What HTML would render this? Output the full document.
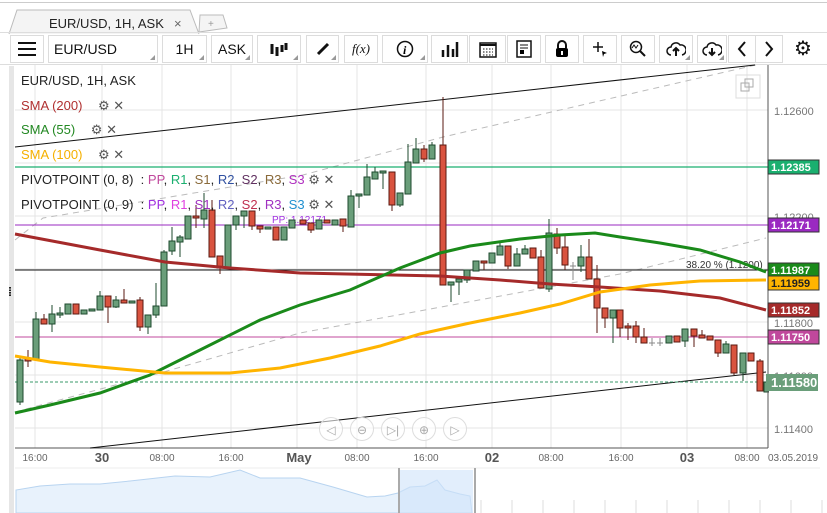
<!DOCTYPE html>
<html><head><meta charset="utf-8"><style>
*{margin:0;padding:0;box-sizing:border-box}
body{width:827px;height:513px;background:#fff;font-family:"Liberation Sans",sans-serif;overflow:hidden;position:relative}
.b{position:absolute;top:35px;height:28px;border:1px solid #dcdcdc;background:#fff;font-size:14px;color:#111;display:flex;align-items:center;justify-content:center}
.b:after{content:"";position:absolute;right:2px;bottom:2px;border-left:5px solid transparent;border-bottom:5px solid #999}
.n:after{display:none}
.lg{position:absolute;left:21px;font-size:13px;color:#222;white-space:nowrap}
</style></head><body>
<div style="position:absolute;left:0;top:2px;width:827px;height:1px;background:#ccc"></div>
<svg style="position:absolute;left:0;top:8px" width="240" height="27">
<path d="M9,26 L17,2 L190,2 L199,26" fill="#f4f4f4" stroke="#bbb"/>
<path d="M199,24 L200,7 L223,7 L227,20 Z" fill="#f4f4f4" stroke="#bbb"/>
<text x="49" y="20" font-size="13" fill="#222" font-family="Liberation Sans">EUR/USD, 1H, ASK</text>
<text x="174" y="20" font-size="13" fill="#666" font-family="Liberation Sans">×</text>
<text x="208" y="19" font-size="10" fill="#999" font-family="Liberation Sans">+</text>
</svg>
<div style="position:absolute;left:0;top:32px;width:827px;height:1px;background:#ddd"></div>
<div class="b n" style="left:10px;width:34px"><svg width="18" height="14"><path d="M0,1H18M0,7H18M0,13H18" stroke="#111" stroke-width="2"/></svg></div>
<div class="b" style="left:48px;width:110px;justify-content:flex-start;padding-left:5px">EUR/USD</div>
<div class="b" style="left:162px;width:45px">1H</div>
<div class="b" style="left:211px;width:42px">ASK</div>
<div class="b" style="left:257px;width:44px"><svg width="18" height="14"><path d="M2,2V12M7,5V14M12,3V10M16,1V8" stroke="#111" stroke-width="3"/></svg></div>
<div class="b" style="left:306px;width:33px"><svg width="14" height="14"><path d="M2,12L12,2" stroke="#111" stroke-width="3"/></svg></div>
<div class="b n" style="left:344px;width:34px;font-family:'Liberation Serif';font-style:italic;font-size:13px">f(x)</div>
<div class="b" style="left:382px;width:46px"><svg width="18" height="18"><circle cx="9" cy="9" r="7.5" fill="none" stroke="#111" stroke-width="1.5"/><text x="7" y="14" font-size="12" font-style="italic" font-weight="bold" font-family="Liberation Serif">i</text></svg></div>
<div class="b n" style="left:431px;width:37px"><svg width="18" height="16"><path d="M2,16V9M7,16V4M12,16V8M16,16V1" stroke="#111" stroke-width="2.5"/></svg></div>
<div class="b n" style="left:469px;width:37px"><svg width="18" height="18"><rect x="1" y="3" width="16" height="14" fill="none" stroke="#111" stroke-width="1.5"/><path d="M1,5H17" stroke="#111" stroke-width="2"/><path d="M4,9h10M4,12h10M4,15h10" stroke="#111" stroke-dasharray="1.5 1.5"/></svg></div>
<div class="b n" style="left:507px;width:34px"><svg width="16" height="18"><rect x="1" y="1" width="14" height="16" fill="none" stroke="#111" stroke-width="1.5"/><path d="M4,5h8M4,8h8" stroke="#111"/><rect x="4" y="10" width="4" height="4"/></svg></div>
<div class="b n" style="left:545px;width:34px"><svg width="16" height="18"><path d="M4,8V5a4,4 0 0 1 8,0V8" fill="none" stroke="#111" stroke-width="2"/><rect x="2" y="8" width="12" height="9" rx="2"/><rect x="7" y="11" width="2" height="4" fill="#fff"/></svg></div>
<div class="b n" style="left:583px;width:34px"><svg width="16" height="16"><path d="M6,1V11M1,6H11" stroke="#111" stroke-width="1.5"/><path d="M10,10L15,12L12,13L11,16Z"/></svg></div>
<div class="b n" style="left:621px;width:34px"><svg width="18" height="18"><circle cx="7" cy="7" r="5.5" fill="none" stroke="#111" stroke-width="1.5"/><path d="M11,11L16,16" stroke="#111" stroke-width="2"/><path d="M3,8L5,5L7,8L9,5" fill="none" stroke="#111"/></svg></div>
<div class="b" style="left:659px;width:34px"><svg width="20" height="16"><path d="M5,14A4,4 0 0 1 5,6A5,5 0 0 1 14,4A4,4 0 0 1 16,14" fill="none" stroke="#111" stroke-width="1.5"/><path d="M10,15V8M7,10L10,7L13,10" fill="none" stroke="#111" stroke-width="2"/></svg></div>
<div class="b" style="left:697px;width:30px"><svg width="20" height="16"><path d="M5,14A4,4 0 0 1 5,6A5,5 0 0 1 14,4A4,4 0 0 1 16,14" fill="none" stroke="#111" stroke-width="1.5"/><path d="M10,7V14M7,11L10,14L13,11" fill="none" stroke="#111" stroke-width="2"/></svg></div>
<div class="b n" style="left:728px;width:28px"><svg width="10" height="16"><path d="M8,1L2,8L8,15" fill="none" stroke="#111" stroke-width="2"/></svg></div>
<div class="b n" style="left:755px;width:28px"><svg width="10" height="16"><path d="M2,1L8,8L2,15" fill="none" stroke="#111" stroke-width="2"/></svg></div>
<div style="position:absolute;left:794px;top:40px;font-size:20px;color:#111;line-height:18px">⚙</div>
<div style="position:absolute;left:0;top:64px;width:827px;height:1px;background:#ddd"></div>
<div style="position:absolute;left:9px;top:66px;width:5px;height:447px;background:#e6e6e6"></div>
<div style="position:absolute;left:8px;top:285px;font-size:12px;font-weight:bold">⁞</div>
<svg id="c" style="position:absolute;left:0;top:0" width="827" height="513" font-family="Liberation Sans"></svg>
<div class="lg" style="top:73px">EUR/USD, 1H, ASK</div>
<div class="lg" style="top:98px;color:#b03030">SMA (200) <span style="color:#555;margin-left:12px">⚙ ✕</span></div>
<div class="lg" style="top:122px;color:#228822">SMA (55) <span style="color:#555;margin-left:12px">⚙ ✕</span></div>
<div class="lg" style="top:147px;color:#f5b000">SMA (100) <span style="color:#555;margin-left:12px">⚙ ✕</span></div>
<div class="lg" style="top:172px">PIVOTPOINT (0, 8) &nbsp;: <span style="color:#c0489c">PP</span>, <span style="color:#1aaf6f">R1</span>, <span style="color:#8a6a3a">S1</span>, <span style="color:#3050a0">R2</span>, <span style="color:#603060">S2</span>, <span style="color:#8a6a3a">R3</span>, <span style="color:#b030c0">S3</span> <span style="color:#555">⚙ ✕</span></div>
<div class="lg" style="top:197px">PIVOTPOINT (0, 9) &nbsp;: <span style="color:#a030e0">PP</span>, <span style="color:#e040e0">R1</span>, <span style="color:#a030c0">S1</span>, <span style="color:#6060c0">R2</span>, <span style="color:#c03050">S2</span>, <span style="color:#a030c0">R3</span>, <span style="color:#2090d0">S3</span> <span style="color:#555">⚙ ✕</span></div>
<script>
var s='',ns=document.getElementById('c');
var X=[35,102,162,231,297,357,426,492,551,621,687,747],Y=[110,163,216,269,322,375,428];
X.forEach(x=>s+=`<line x1="${x}" y1="65" x2="${x}" y2="448" stroke="#e4e4e4"/>`);
Y.forEach(y=>s+=`<line x1="15" y1="${y}" x2="768" y2="${y}" stroke="#e4e4e4"/>`);
s+=`<line x1="15" y1="448" x2="768" y2="448" stroke="#555"/><line x1="768" y1="65" x2="768" y2="448" stroke="#555"/>`;
s+=`<rect x="736" y="75" width="24" height="23" fill="none" stroke="#ddd"/><rect x="741" y="83" width="8" height="8" fill="none" stroke="#aaa"/><rect x="745" y="79" width="8" height="8" fill="none" stroke="#aaa"/>`;
s+=`<polyline points="15,240 43,218 303,175 443,137 760,64" fill="none" stroke="#bbb" stroke-dasharray="6 5"/>`;
s+=`<polyline points="15,412 160,373 300,333 620,274 766,238" fill="none" stroke="#bbb" stroke-dasharray="6 5"/>`;
s+=`<line x1="15" y1="147" x2="755" y2="65" stroke="#111"/><line x1="90" y1="448" x2="766" y2="372" stroke="#111"/>`;
s+=`<line x1="15" y1="167" x2="768" y2="167" stroke="#1aaf6f" stroke-width="1.2"/><line x1="15" y1="225" x2="768" y2="225" stroke="#9a29c1"/><line x1="15" y1="270" x2="768" y2="270" stroke="#111"/><line x1="15" y1="337" x2="768" y2="337" stroke="#c0489c"/><line x1="15" y1="382" x2="768" y2="382" stroke="#3a9a6a" stroke-dasharray="3 2"/>`;
s+=`<text x="272" y="223" font-size="10" fill="#a030e0">PP: 1.12171</text><text x="686" y="268" font-size="10" fill="#333">38.20 % (1.1200)</text>`;
var C=[[20,360,402,356,405,1],[28,359,361,350,367,0],[36,319,360,312,360,1],[44,319,324,314,324,0],[52,314,324,305,332,1],[60,313,315,307,318,1],[68,304,314,304,314,1],[76,304,314,304,314,0],[84,310,314,310,314,1],[92,309,311,309,311,1],[100,296,310,291,310,1],[108,296,307,296,323,0],[116,300,307,296,308,1],[124,300,303,289,303,0],[132,301,303,301,303,1],[140,300,327,297,331,0],[148,315,327,315,334,1],[156,306,315,283,318,1],[164,252,306,250,306,1],[172,241,251,227,255,1],[180,237,242,235,257,1],[188,216,239,216,239,1],[196,216,218,205,228,0],[204,210,219,193,228,1],[212,210,257,200,257,0],[220,256,268,256,274,0],[228,225,268,225,268,1],[236,216,225,216,230,1],[244,211,216,211,228,1],[252,211,226,211,230,0],[260,226,229,226,233,0],[268,227,229,227,229,1],[276,227,240,227,240,0],[284,227,240,227,240,1],[292,220,228,220,228,1],[303,220,224,220,224,0],[311,223,230,223,233,0],[319,220,229,220,229,1],[327,220,223,220,223,0],[335,220,225,220,225,1],[343,219,226,219,232,0],[351,196,227,190,227,1],[359,194,196,194,208,1],[367,177,195,164,195,1],[375,172,179,167,179,1],[383,171,173,171,189,1],[392,172,205,172,211,0],[400,193,205,193,207,1],[408,162,194,144,194,1],[416,149,163,138,163,1],[424,149,159,145,162,0],[432,145,159,142,159,1],[443,145,285,97,285,0],[451,282,285,282,302,1],[459,279,282,279,295,1],[467,270,280,270,283,1],[476,261,271,261,271,1],[484,261,263,261,270,0],[492,253,263,253,263,1],[500,246,255,243,255,1],[508,246,266,246,269,0],[517,254,266,248,266,1],[525,249,254,245,254,1],[533,248,258,248,252,0],[541,257,288,250,288,0],[549,233,289,219,292,1],[557,234,248,228,254,0],[565,247,265,236,270,0],[573,265,267,262,280,2],[581,257,266,245,272,1],[589,257,279,239,279,0],[597,279,308,265,333,0],[605,308,318,308,328,0],[613,310,318,310,343,1],[620,310,328,310,337,0],[628,326,328,323,340,0],[636,326,337,321,343,0],[644,337,343,328,343,0],[652,342,344,338,346,2],[660,342,344,338,346,2],[669,336,343,336,343,1],[677,336,342,336,342,0],[685,329,341,329,347,1],[694,329,336,329,347,0],[702,335,338,330,338,0],[710,336,340,336,340,0],[718,340,353,340,357,0],[726,344,353,341,353,1],[734,345,373,345,375,0],[743,353,373,353,381,1],[751,353,361,353,361,0],[760,361,391,359,391,0],[767,382,392,382,392,1]];
C.forEach(c=>{var col=c[5]==1?'#6a9e7a':c[5]==0?'#d9533f':'#888',st=c[5]==1?'#1e4a2e':c[5]==0?'#5a1a10':'#888';
s+=`<line x1="${c[0]}" y1="${c[3]}" x2="${c[0]}" y2="${c[4]}" stroke="${st}"/>`;
if(c[5]==2)s+=`<line x1="${c[0]-3}" y1="${c[1]+1}" x2="${c[0]+3}" y2="${c[1]+1}" stroke="#888"/>`;
else s+=`<rect x="${c[0]-3}" y="${c[1]}" width="6" height="${Math.max(2,c[2]-c[1])}" fill="${col}" stroke="${st}"/>`;});
s+=`<polyline points="15,234 100,250 165,262 230,268 300,273 440,276 500,280 550,284 600,287 660,291 720,298 766,310" fill="none" stroke="#a52a2a" stroke-width="3"/>`;
s+=`<polyline points="15,413 50,405 100,393 150,375 200,350 260,320 300,305 350,290 400,268 440,253 470,246 520,239 560,235 595,233 620,237 660,243 700,250 740,262 766,272" fill="none" stroke="#1a8a1a" stroke-width="3"/>`;
s+=`<polyline points="15,356 50,362 100,367 165,373 230,373 280,368 330,358 380,346 420,334 470,323 520,313 560,304 600,292 650,285 700,281 766,280" fill="none" stroke="#ffb400" stroke-width="3"/>`;
s+=`<rect x="769" y="65" width="58" height="390" fill="#fff"/>`;
[['1.12600',110],['1.12400',163],['1.12200',216],['1.12000',269],['1.11800',322],['1.11600',375],['1.11400',428]].forEach(t=>s+=`<text x="774" y="${t[1]+5}" font-size="11" fill="#777">${t[0]}</text>`);
s+=`<line x1="768" y1="65" x2="768" y2="448" stroke="#555"/>`;
[['1.12385',160,'#1aaf6f'],['1.12171',218,'#9a29c1'],['1.11987',263,'#1a8a1a'],['1.11959',276,'#ffb400'],['1.11852',303,'#a52a2a'],['1.11750',330,'#c0489c']].forEach(t=>s+=`<rect x="768" y="${t[1]}" width="51" height="14" fill="${t[2]}" stroke="#333"/><text x="771" y="${t[1]+11}" font-size="11" font-weight="bold" fill="${t[2]=='#ffb400'?'#222':'#fff'}">${t[0]}</text>`);
s+=`<rect x="766" y="374" width="52" height="17" fill="#6a9e7a"/><text x="771" y="387" font-size="13" font-weight="bold" fill="#fff">1.11580</text>`;
[[331,'◁'],[362,'⊖'],[393,'▷|'],[424,'⊕'],[455,'▷']].forEach(b=>s+=`<circle cx="${b[0]}" cy="429" r="11.5" fill="#fff" fill-opacity=".6" stroke="#ddd"/><text x="${b[0]}" y="434" font-size="12" fill="#aaa" text-anchor="middle">${b[1]}</text>`);
[['16:00',35],['08:00',162],['16:00',231],['08:00',357],['16:00',426],['08:00',551],['16:00',621],['08:00',747]].forEach(t=>s+=`<text x="${t[1]}" y="461" font-size="10" fill="#666" text-anchor="middle">${t[0]}</text>`);
[['30',102],['May',299],['02',492],['03',687]].forEach(t=>s+=`<text x="${t[1]}" y="462" font-size="13" font-weight="bold" fill="#555" text-anchor="middle">${t[0]}</text>`);
s+=`<text x="768" y="461" font-size="10" fill="#666">03.05.2019</text>`;
s+=`<line x1="15" y1="468" x2="820" y2="468" stroke="#eee"/>`;
for(var i=0;i<27;i++){var x=47+i*31;s+=`<line x1="${x}" y1="500" x2="${x}" y2="513" stroke="#ddd"/>`;}
s+=`<path d="M16,513 L16,490 40,486 70,484 100,484 130,481 175,476 210,477 240,470 260,478 300,478 333,487 350,492 367,497 385,496 398,493 410,487 425,486 437,480 445,490 460,494 470,496 472,513Z" fill="#e8f2fc" stroke="#b8d4f0"/>`;
s+=`<rect x="399" y="470" width="74" height="43" fill="#cfe3fa" fill-opacity=".6"/><line x1="399" y1="468" x2="399" y2="513" stroke="#aaa" stroke-width="2"/><line x1="475" y1="468" x2="475" y2="513" stroke="#aaa" stroke-width="2"/>`;
ns.innerHTML=s;
</script>
</body></html>
